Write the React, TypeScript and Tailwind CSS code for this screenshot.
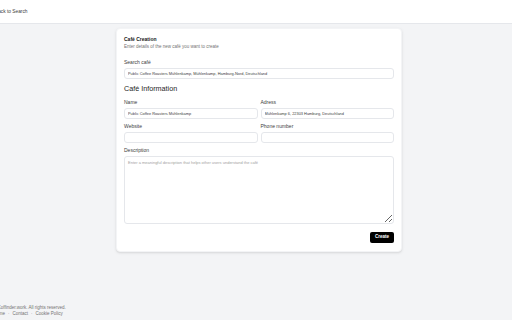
import { ArrowLeft } from 'lucide-react';

function Field({ label, value, placeholder }: { label: string; value?: string; placeholder?: string }) {
  return (
    <div className="flex flex-col">
      <label className="text-[5px] leading-[6px] text-neutral-700">{label}</label>
      <input
        readOnly
        defaultValue={value}
        placeholder={placeholder}
        className="mt-[3px] h-[11px] w-full rounded-[3px] border border-gray-200 bg-white px-[3px] text-[3.9px] text-neutral-700 outline-none"
      />
    </div>
  );
}

export default function App() {
  return (
    <div className="flex min-h-screen flex-col bg-[#f3f4f6] font-['Liberation_Sans',Arial,sans-serif] text-neutral-900">
      {/* Header */}
      <header className="flex h-[24px] items-center border-b border-gray-200 bg-white">
        <div className="-ml-[13px] flex items-center gap-[2px] text-[4.8px] text-neutral-700">
          <ArrowLeft size={6} />
          <span>Back to Search</span>
        </div>
      </header>

      {/* Main */}
      <main className="flex flex-1 items-start justify-center pt-[4px]">
        <div className="ml-[6px] w-[286px] rounded-[4px] border border-gray-100 bg-white px-[7px] pb-[8px] pt-[7px] shadow-sm">
          <h2 className="text-[5px] font-semibold leading-[7px]">Café Creation</h2>
          <p className="mt-[1px] text-[4.5px] leading-[6px] text-neutral-500">Enter details of the new café you want to create</p>

          <div className="mt-[9px]">
            <Field label="Search café" value="Public Coffee Roasters Mühlenkamp, Mühlenkamp, Hamburg-Nord, Deutschland" />
          </div>

          <h3 className="mt-[5px] text-[7.2px] leading-[10px] text-neutral-800">Café Information</h3>

          <div className="mt-[5px] grid grid-cols-2 gap-x-[3px] gap-y-[4px]">
            <Field label="Name" value="Public Coffee Roasters Mühlenkamp" />
            <Field label="Adress" value="Mühlenkamp 6, 22303 Hamburg, Deutschland" />
            <Field label="Website" />
            <Field label="Phone number" />
          </div>

          <div className="mt-[4px] flex flex-col">
            <label className="text-[5px] leading-[6px] text-neutral-700">Description</label>
            <textarea
              readOnly
              placeholder="Enter a meaningful description that helps other users understand the café"
              className="mt-[3px] h-[68px] w-full rounded-[3px] border border-gray-200 px-[3px] py-[3px] text-[4px] leading-[6px] text-neutral-700 outline-none placeholder:text-neutral-400"
            />
          </div>

          <div className="mt-[8px] flex justify-end">
            <button className="h-[11px] w-[24px] rounded-[2px] bg-black text-[4.5px] font-semibold text-white">Create</button>
          </div>
        </div>
      </main>

      {/* Footer */}
      <footer className="-ml-[7px] pb-[3px] text-[4.5px] leading-[6px] text-neutral-500">
        <p>© Coffinder.work. All rights reserved.</p>
        <p className="flex gap-[3px]">
          <span>Home</span>
          <span>·</span>
          <span>Contact</span>
          <span>·</span>
          <span>Cookie Policy</span>
        </p>
      </footer>
    </div>
  );
}
